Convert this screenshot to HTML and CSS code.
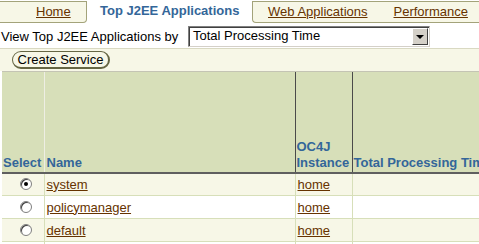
FILE: index.html
```html
<!DOCTYPE html>
<html lang="en">
<head>
    <meta charset="UTF-8">
    <title>Top J2EE Applications</title>
    <link rel="stylesheet" href="styles.css">
</head>
<body>
    <div class="tabs">
        <div class="tab tab-home"><a href="#">Home</a></div>
        <div class="tab tab-active">Top J2EE Applications</div>
        <div class="tab tab-rest">
            <a href="#">Web Applications</a>
            <a href="#">Performance</a>
        </div>
    </div>

    <div class="view-row">
        <span class="view-label">View Top J2EE Applications by</span>
        <div class="combo">
            <span class="combo-text">Total Processing Time</span>
            <span class="combo-btn"><span class="arrow"></span></span>
        </div>
    </div>

    <div class="toolbar">
        <button class="btn">Create Service</button>
    </div>

    <table class="apps">
        <colgroup>
            <col style="width: 42px">
            <col style="width: 251px">
            <col style="width: 57px">
            <col style="width: 200px">
        </colgroup>
        <thead>
            <tr>
                <th class="col-select">Select</th>
                <th class="col-name">Name</th>
                <th class="col-dark">OC4J<br>Instance</th>
                <th class="col-dark col-total">Total Processing Time</th>
            </tr>
        </thead>
        <tbody>
            <tr class="odd">
                <td class="radio-cell"><span class="radio checked"></span></td>
                <td><a href="#">system</a></td>
                <td><a href="#">home</a></td>
                <td></td>
            </tr>
            <tr>
                <td class="radio-cell"><span class="radio"></span></td>
                <td><a href="#">policymanager</a></td>
                <td><a href="#">home</a></td>
                <td></td>
            </tr>
            <tr class="odd">
                <td class="radio-cell"><span class="radio"></span></td>
                <td><a href="#">default</a></td>
                <td><a href="#">home</a></td>
                <td></td>
            </tr>
            <tr>
                <td class="radio-cell"></td>
                <td></td>
                <td></td>
                <td></td>
            </tr>
        </tbody>
    </table>
</body>
</html>
```

FILE: styles.css
```css
* {
    box-sizing: border-box;
    margin: 0;
    padding: 0;
}
html, body {
    overflow: hidden;
}
body {
    background-color: #ffffff;
    font-family: "Liberation Sans", Arial, sans-serif;
    font-size: 13px;
    color: #000000;
    padding-top: 1px;
}
a {
    color: #663300;
    text-decoration: underline;
}

/* tabs */
.tabs {
    display: flex;
    height: 22px;
}
.tab {
    height: 22px;
    line-height: 19px;
    white-space: nowrap;
}
.tab-home {
    width: 87px;
    padding-left: 36px;
    background-color: #f7f7e7;
    border-top: 1px solid #a3a37a;
    border-bottom: 1px solid #a3a37a;
    border-right: 1px solid #a3a37a;
    border-bottom-right-radius: 4px;
}
.tab-active {
    width: 165px;
    padding-left: 13px;
    font-weight: bold;
    color: #336699;
    background-color: #ffffff;
}
.tab-rest {
    flex: 1;
    padding-left: 15px;
    display: flex;
    gap: 26px;
    background-color: #f7f7e7;
    border-top: 1px solid #a3a37a;
    border-bottom: 1px solid #a3a37a;
    border-left: 1px solid #a3a37a;
    border-bottom-left-radius: 4px;
}

/* view by */
.view-row {
    display: flex;
    align-items: center;
    height: 25px;
    padding-top: 2px;
    padding-left: 1px;
}
.view-label {
    width: 187px;
}
.combo {
    display: flex;
    width: 242px;
    height: 21px;
    background-color: #ffffff;
    border-top: 1px solid #808080;
    border-left: 1px solid #808080;
    border-right: 1px solid #d4d0c8;
    border-bottom: 1px solid #d4d0c8;
    box-shadow: inset 1px 1px 0 #404040;
}
.combo-text {
    flex: 1;
    padding-left: 4px;
    line-height: 18px;
}
.combo-btn {
    width: 16px;
    height: 17px;
    margin: 1px 1px 0 0;
    background-color: #d4d0c8;
    border-top: 1px solid #ffffff;
    border-left: 1px solid #ffffff;
    border-right: 1px solid #404040;
    border-bottom: 1px solid #404040;
    display: flex;
    align-items: center;
    justify-content: center;
}
.arrow {
    width: 0;
    height: 0;
    border-left: 4px solid transparent;
    border-right: 4px solid transparent;
    border-top: 4px solid #000000;
}

/* toolbar */
.toolbar {
    border-top: 1px solid #d9d9c2;
    background-color: #f7f7e7;
    height: 23px;
    padding: 2px 0 0 12px;
}
.btn {
    font-family: "Liberation Sans", Arial, sans-serif;
    font-size: 13px;
    height: 18px;
    width: 98px;
    line-height: 14px;
    background-color: #f7f7e7;
    color: #000000;
    border: 1px solid #666644;
    border-right-width: 2px;
    border-bottom-width: 2px;
    border-radius: 9px;
}

/* table */
.apps {
    border-collapse: collapse;
    table-layout: fixed;
    width: 550px;
    margin-left: 2px;
}
.apps th {
    height: 101px;
    background-color: #d7dfb9;
    color: #336699;
    font-weight: bold;
    text-align: left;
    vertical-align: bottom;
    line-height: 16px;
    padding: 0 0 1px 1px;
    border-top: 1px solid #c4c4b4;
    border-bottom: 2px solid #5f5f5f;
    white-space: nowrap;
    overflow: hidden;
}
.apps th.col-name {
    border-left: 1px solid #eeeee4;
    padding-left: 2px;
}
.apps th.col-dark {
    border-left: 1px solid #4a4a4a;
    padding-left: 1px;
}
.apps td {
    height: 23px;
    padding: 0 0 0 2px;
    border-bottom: 1px solid #d7dfb9;
    border-left: 1px solid #d7dfb9;
    background-color: #ffffff;
    vertical-align: middle;
}
.apps tr.odd td {
    background-color: #f7f7e7;
}
.apps td.radio-cell {
    border-left: 0;
    padding-left: 18px;
}
.radio {
    display: block;
    width: 12px;
    height: 12px;
    border-radius: 50%;
    background-color: #ffffff;
    border: 1px solid #808080;
    box-shadow: inset 1px 1px 0 #404040;
    position: relative;
}
.radio.checked::after {
    content: "";
    position: absolute;
    left: 3px;
    top: 3px;
    width: 4px;
    height: 4px;
    border-radius: 50%;
    background-color: #000000;
}
```
